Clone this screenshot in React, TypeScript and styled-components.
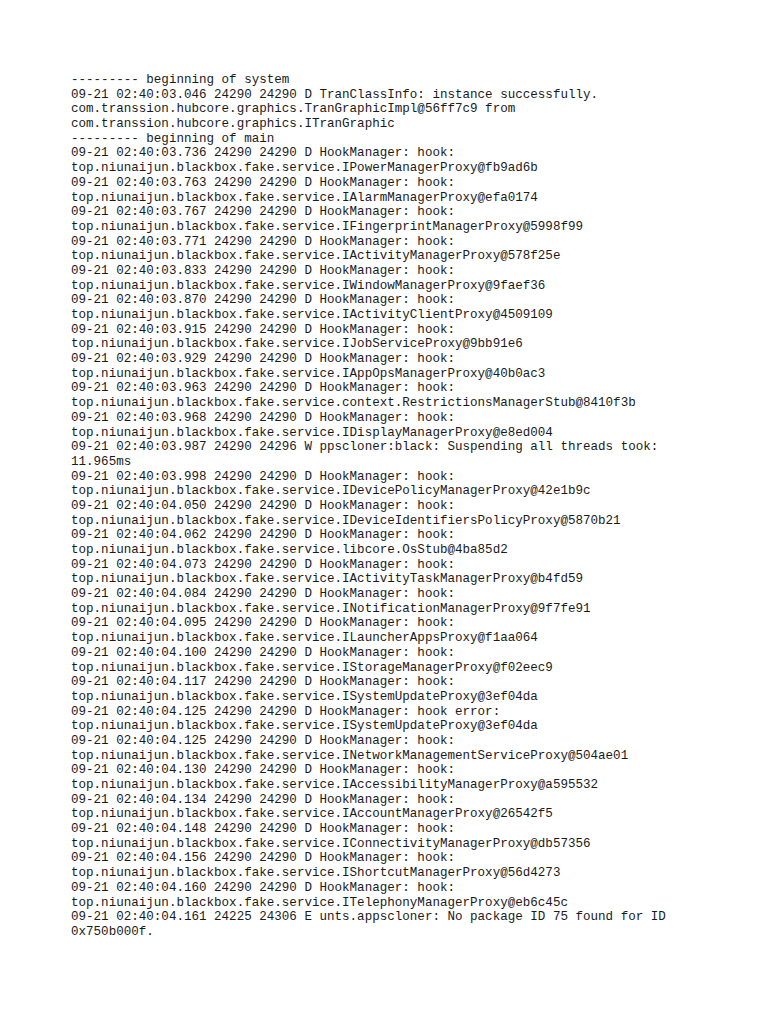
import React from "react";
import styled, { createGlobalStyle } from "styled-components";

const Global = createGlobalStyle`
  html, body { margin: 0; padding: 0; background: #ffffff; }
`;

const Page = styled.div`
  width: 768px;
  min-height: 1024px;
  box-sizing: border-box;
  padding: 73px 0 0 71px;
  background: #ffffff;
`;

const Log = styled.div`
  display: flex;
  flex-direction: column;
  font-family: "Liberation Mono", "Courier New", monospace;
  font-size: 12.55px;
  line-height: 14.69px;
  color: #1a1a1a;
`;

const Line = styled.div`
  white-space: pre;
`;

const lines: string[] = [
  "--------- beginning of system",
  "09-21 02:40:03.046 24290 24290 D TranClassInfo: instance successfully.",
  "com.transsion.hubcore.graphics.TranGraphicImpl@56ff7c9 from",
  "com.transsion.hubcore.graphics.ITranGraphic",
  "--------- beginning of main",
  "09-21 02:40:03.736 24290 24290 D HookManager: hook:",
  "top.niunaijun.blackbox.fake.service.IPowerManagerProxy@fb9ad6b",
  "09-21 02:40:03.763 24290 24290 D HookManager: hook:",
  "top.niunaijun.blackbox.fake.service.IAlarmManagerProxy@efa0174",
  "09-21 02:40:03.767 24290 24290 D HookManager: hook:",
  "top.niunaijun.blackbox.fake.service.IFingerprintManagerProxy@5998f99",
  "09-21 02:40:03.771 24290 24290 D HookManager: hook:",
  "top.niunaijun.blackbox.fake.service.IActivityManagerProxy@578f25e",
  "09-21 02:40:03.833 24290 24290 D HookManager: hook:",
  "top.niunaijun.blackbox.fake.service.IWindowManagerProxy@9faef36",
  "09-21 02:40:03.870 24290 24290 D HookManager: hook:",
  "top.niunaijun.blackbox.fake.service.IActivityClientProxy@4509109",
  "09-21 02:40:03.915 24290 24290 D HookManager: hook:",
  "top.niunaijun.blackbox.fake.service.IJobServiceProxy@9bb91e6",
  "09-21 02:40:03.929 24290 24290 D HookManager: hook:",
  "top.niunaijun.blackbox.fake.service.IAppOpsManagerProxy@40b0ac3",
  "09-21 02:40:03.963 24290 24290 D HookManager: hook:",
  "top.niunaijun.blackbox.fake.service.context.RestrictionsManagerStub@8410f3b",
  "09-21 02:40:03.968 24290 24290 D HookManager: hook:",
  "top.niunaijun.blackbox.fake.service.IDisplayManagerProxy@e8ed004",
  "09-21 02:40:03.987 24290 24296 W ppscloner:black: Suspending all threads took:",
  "11.965ms",
  "09-21 02:40:03.998 24290 24290 D HookManager: hook:",
  "top.niunaijun.blackbox.fake.service.IDevicePolicyManagerProxy@42e1b9c",
  "09-21 02:40:04.050 24290 24290 D HookManager: hook:",
  "top.niunaijun.blackbox.fake.service.IDeviceIdentifiersPolicyProxy@5870b21",
  "09-21 02:40:04.062 24290 24290 D HookManager: hook:",
  "top.niunaijun.blackbox.fake.service.libcore.OsStub@4ba85d2",
  "09-21 02:40:04.073 24290 24290 D HookManager: hook:",
  "top.niunaijun.blackbox.fake.service.IActivityTaskManagerProxy@b4fd59",
  "09-21 02:40:04.084 24290 24290 D HookManager: hook:",
  "top.niunaijun.blackbox.fake.service.INotificationManagerProxy@9f7fe91",
  "09-21 02:40:04.095 24290 24290 D HookManager: hook:",
  "top.niunaijun.blackbox.fake.service.ILauncherAppsProxy@f1aa064",
  "09-21 02:40:04.100 24290 24290 D HookManager: hook:",
  "top.niunaijun.blackbox.fake.service.IStorageManagerProxy@f02eec9",
  "09-21 02:40:04.117 24290 24290 D HookManager: hook:",
  "top.niunaijun.blackbox.fake.service.ISystemUpdateProxy@3ef04da",
  "09-21 02:40:04.125 24290 24290 D HookManager: hook error:",
  "top.niunaijun.blackbox.fake.service.ISystemUpdateProxy@3ef04da",
  "09-21 02:40:04.125 24290 24290 D HookManager: hook:",
  "top.niunaijun.blackbox.fake.service.INetworkManagementServiceProxy@504ae01",
  "09-21 02:40:04.130 24290 24290 D HookManager: hook:",
  "top.niunaijun.blackbox.fake.service.IAccessibilityManagerProxy@a595532",
  "09-21 02:40:04.134 24290 24290 D HookManager: hook:",
  "top.niunaijun.blackbox.fake.service.IAccountManagerProxy@26542f5",
  "09-21 02:40:04.148 24290 24290 D HookManager: hook:",
  "top.niunaijun.blackbox.fake.service.IConnectivityManagerProxy@db57356",
  "09-21 02:40:04.156 24290 24290 D HookManager: hook:",
  "top.niunaijun.blackbox.fake.service.IShortcutManagerProxy@56d4273",
  "09-21 02:40:04.160 24290 24290 D HookManager: hook:",
  "top.niunaijun.blackbox.fake.service.ITelephonyManagerProxy@eb6c45c",
  "09-21 02:40:04.161 24225 24306 E unts.appscloner: No package ID 75 found for ID",
  "0x750b000f.",
];

export default function App() {
  return (
    <>
      <Global />
      <Page>
        <Log>
          {lines.map((l, i) => (
            <Line key={i}>{l}</Line>
          ))}
        </Log>
      </Page>
    </>
  );
}
